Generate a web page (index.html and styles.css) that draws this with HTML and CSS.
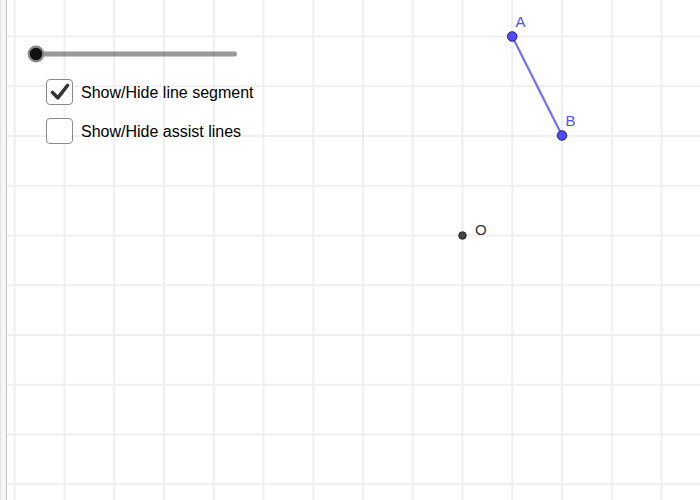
FILE: index.html
```html
<!DOCTYPE html>
<html>
<head>
<meta charset="utf-8">
<link rel="stylesheet" href="styles.css">
</head>
<body>
<div class="app">
  <div class="sidebar"></div>
  <div class="canvas">
    <svg class="board" width="693" height="500" viewBox="7 0 693 500" xmlns="http://www.w3.org/2000/svg">
      <g stroke="#efefef" stroke-width="2">
        <line x1="14.75" y1="0" x2="14.75" y2="500"/>
        <line x1="64.5" y1="0" x2="64.5" y2="500"/>
        <line x1="114.25" y1="0" x2="114.25" y2="500"/>
        <line x1="164" y1="0" x2="164" y2="500"/>
        <line x1="213.75" y1="0" x2="213.75" y2="500"/>
        <line x1="263.5" y1="0" x2="263.5" y2="500"/>
        <line x1="313.25" y1="0" x2="313.25" y2="500"/>
        <line x1="363" y1="0" x2="363" y2="500"/>
        <line x1="412.75" y1="0" x2="412.75" y2="500"/>
        <line x1="462.5" y1="0" x2="462.5" y2="500"/>
        <line x1="512.25" y1="0" x2="512.25" y2="500"/>
        <line x1="562" y1="0" x2="562" y2="500"/>
        <line x1="611.75" y1="0" x2="611.75" y2="500"/>
        <line x1="661.5" y1="0" x2="661.5" y2="500"/>
        <line x1="0" y1="36.5" x2="700" y2="36.5"/>
        <line x1="0" y1="86.25" x2="700" y2="86.25"/>
        <line x1="0" y1="136" x2="700" y2="136"/>
        <line x1="0" y1="185.75" x2="700" y2="185.75"/>
        <line x1="0" y1="235.5" x2="700" y2="235.5"/>
        <line x1="0" y1="285.25" x2="700" y2="285.25"/>
        <line x1="0" y1="335" x2="700" y2="335"/>
        <line x1="0" y1="384.75" x2="700" y2="384.75"/>
        <line x1="0" y1="434.5" x2="700" y2="434.5"/>
        <line x1="0" y1="484.25" x2="700" y2="484.25"/>
      </g>
      <line x1="512.25" y1="36.5" x2="562" y2="135.5" stroke="#7070ff" stroke-width="2.2"/>
      <circle cx="512.25" cy="36.5" r="4.8" fill="#4d4dff" stroke="#1a1a40" stroke-width="0.9"/>
      <circle cx="562" cy="135.5" r="4.8" fill="#4d4dff" stroke="#1a1a40" stroke-width="0.9"/>
      <circle cx="462.5" cy="235.5" r="3.8" fill="#444" stroke="#111" stroke-width="0.8"/>
      <text x="515.5" y="26.8" class="lbl lbl-blue">A</text>
      <text x="565.5" y="126" class="lbl lbl-blue">B</text>
      <text x="475" y="235.3" class="lbl lbl-dark">O</text>
    </svg>
    <div class="controls">
      <svg class="slider" width="220" height="20" viewBox="0 0 220 20" xmlns="http://www.w3.org/2000/svg">
        <line x1="10" y1="10" x2="208.5" y2="10" stroke="rgba(0,0,0,0.4)" stroke-width="5" stroke-linecap="round"/>
        <circle cx="10" cy="10" r="7.3" fill="#111" stroke="#8a8a8a" stroke-width="2.2"/>
      </svg>
      <div class="options">
        <label class="option">
          <span class="box">
            <svg width="24" height="24" viewBox="0 0 24 24" xmlns="http://www.w3.org/2000/svg">
              <path d="M4.5 12.5 L9.8 17.8 L19.5 5.5" fill="none" stroke="#333" stroke-width="3.6" stroke-linecap="round" stroke-linejoin="round"/>
            </svg>
          </span>
          <span class="text">Show/Hide line segment</span>
        </label>
        <label class="option">
          <span class="box"></span>
          <span class="text">Show/Hide assist lines</span>
        </label>
      </div>
    </div>
  </div>
</div>
</body>
</html>
```
FILE: styles.css
```css
html, body {
  margin: 0;
  padding: 0;
  background: #ffffff;
  width: 700px;
  height: 500px;
  overflow: hidden;
  font-family: "Liberation Sans", Arial, sans-serif;
}

.app {
  display: flex;
  width: 700px;
  height: 500px;
}

.sidebar {
  width: 5px;
  flex: none;
  background: #f5f5f5;
  border-left: 1px solid #e2e2e2;
  border-right: 1px solid #c4c4c4;
}

.canvas {
  position: relative;
  flex: 1;
  height: 500px;
}

.board {
  position: absolute;
  top: 0;
  left: 0;
  display: block;
}

.lbl {
  font-family: "Liberation Sans", Arial, sans-serif;
  font-size: 15px;
}

.lbl-blue {
  fill: #5252ff;
}

.lbl-dark {
  fill: #333333;
}

.controls {
  position: relative;
  padding-top: 44px;
  padding-left: 19px;
}

.slider {
  display: block;
}

.options {
  margin-top: 15px;
  margin-left: 20px;
  display: flex;
  flex-direction: column;
  gap: 13px;
}

.option {
  display: flex;
  align-items: center;
  gap: 8px;
}

.box {
  box-sizing: border-box;
  width: 27px;
  height: 26px;
  border: 1px solid #8a8a8a;
  border-radius: 4px;
  background: #ffffff;
  display: flex;
  align-items: center;
  justify-content: center;
}

.box svg {
  display: block;
}

.text {
  font-size: 16px;
  color: #000000;
  padding-top: 2px;
}
```
